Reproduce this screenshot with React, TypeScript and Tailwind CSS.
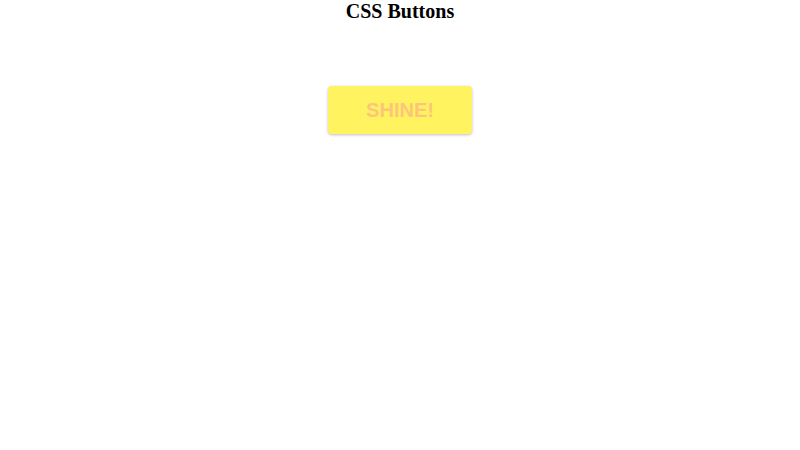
export default function App() {
  return (
    <div className="min-h-[450px] bg-white">
      <h2 className="text-center text-[20px] font-bold leading-[23px] text-black [font-family:'Liberation_Serif',serif]">
        CSS Buttons
      </h2>
      <div className="mt-[63px] flex justify-center">
        <button
          type="button"
          className="h-[48px] w-[144px] rounded-[4px] bg-[#fff35f] text-[20px] font-bold text-[#fdc57b] shadow-[0_1px_3px_rgba(0,0,0,0.25)] [font-family:'Liberation_Sans',sans-serif]"
        >
          SHINE!
        </button>
      </div>
    </div>
  );
}
